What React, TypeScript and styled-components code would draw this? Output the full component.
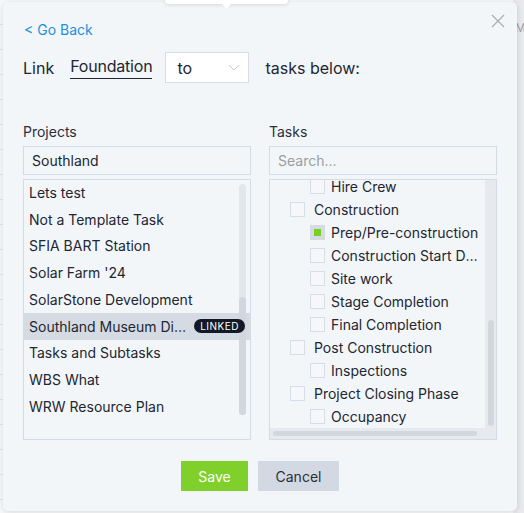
import React from "react";
import styled, { createGlobalStyle } from "styled-components";

const GlobalStyle = createGlobalStyle`
  html, body {
    margin: 0;
    padding: 0;
  }
  body {
    width: 524px;
    height: 513px;
    overflow: hidden;
    font-family: Inter, "Noto Sans", sans-serif;
    color: #222631;
    background: #f6f7f9;
  }
`;

const Page = styled.div`
  position: relative;
  width: 524px;
  height: 513px;
  display: flex;
`;

// the table that sits behind the popover
const TableBehind = styled.div`
  flex: 1;
  background: repeating-linear-gradient(
    to bottom,
    #f8f9fa 0 24px,
    #e3e6ea 24px 25px
  );
`;

const SideBehind = styled.div`
  width: 9px;
  padding: 20px 0 0 2px;
  background: #e8eaed;
  color: #9a9ea6;
  font-size: 12px;
  overflow: hidden;
`;

const Tooltip = styled.div`
  position: absolute;
  z-index: 3;
  left: 165px;
  top: -4px;
  width: 123px;
  height: 8px;
  background: #fff;
  border-radius: 4px;
  box-shadow: 0 1px 4px rgba(0, 0, 0, 0.12);

  &::after {
    content: "";
    position: absolute;
    left: 58px;
    bottom: -3px;
    width: 7px;
    height: 7px;
    background: #fff;
    transform: rotate(45deg);
  }
`;

const Panel = styled.div`
  position: absolute;
  z-index: 2;
  left: 3px;
  top: 2px;
  width: 514px;
  height: 509px;
  box-sizing: border-box;
  padding: 18px 20px 0 20px;
  display: flex;
  flex-direction: column;
  background: #f3f6f9;
  border-radius: 5px;
  box-shadow: 0 1px 6px rgba(0, 0, 0, 0.14);
`;

const CloseButton = styled.button`
  position: absolute;
  top: 11px;
  right: 11px;
  width: 16px;
  height: 16px;
  padding: 0;
  border: 0;
  background: none;
  display: flex;
  align-items: center;
  justify-content: center;
  cursor: pointer;
`;

const GoBack = styled.a`
  align-self: flex-start;
  margin-left: 1px;
  font-size: 14px;
  line-height: 20px;
  color: #2290de;
  text-decoration: none;
  cursor: pointer;
`;

const LinkRow = styled.div`
  margin-top: 12px;
  height: 31px;
  display: flex;
  align-items: center;
  font-size: 16px;
  color: #222631;
`;

const Word = styled.span<{ $gap: number }>`
  margin-right: ${(p) => p.$gap}px;
`;

const Underlined = styled.span`
  margin-right: 13px;
  padding-bottom: 2px;
  border-bottom: 1px solid #222631;
  line-height: 20px;
  letter-spacing: -0.2px;
`;

const Select = styled.div`
  width: 84px;
  height: 31px;
  box-sizing: border-box;
  margin-right: 16px;
  padding: 0 8px 0 11px;
  display: flex;
  align-items: center;
  justify-content: space-between;
  background: #fff;
  border: 1px solid #d6dde6;
  font-size: 16px;
`;

const Columns = styled.div`
  margin-top: 40px;
  display: grid;
  grid-template-columns: 228px 228px;
  column-gap: 18px;
`;

const Column = styled.div`
  display: flex;
  flex-direction: column;
`;

const Label = styled.div`
  font-size: 14px;
  line-height: 18px;
  color: #2b2f38;
`;

const Input = styled.input`
  margin-top: 5px;
  height: 29px;
  box-sizing: border-box;
  padding: 0 8px;
  border: 1px solid #d4dbe4;
  background: #f3f6f9;
  font-family: Inter, "Noto Sans", sans-serif;
  font-size: 14px;
  color: #222631;
  outline: none;

  &::placeholder {
    color: #9a9ea5;
  }
`;

const ListBox = styled.div`
  position: relative;
  margin-top: 4px;
  height: 261px;
  box-sizing: border-box;
  border: 1px solid #d4dbe4;
  overflow: hidden;
`;

const ProjectList = styled.div`
  margin-top: -1px;
`;

const ProjectRow = styled.div<{ $active?: boolean }>`
  height: 26.75px;
  padding-left: 5px;
  display: flex;
  align-items: center;
  font-size: 14px;
  white-space: nowrap;
  background: ${(p) => (p.$active ? "#d5dbe3" : "transparent")};
`;

const RowText = styled.span`
  flex: 1;
  min-width: 0;
  overflow: hidden;
  text-overflow: ellipsis;
`;

const Badge = styled.span`
  position: relative;
  z-index: 1;
  flex: none;
  margin: 0 5px 0 8px;
  height: 14px;
  padding: 0 6px;
  display: flex;
  align-items: center;
  border-radius: 7px;
  background: #131926;
  color: #fff;
  font-size: 10px;
  letter-spacing: 0.5px;
`;

// scrollbar painted over the project list
const OverlayTrack = styled.div`
  position: absolute;
  top: 4px;
  right: 4px;
  width: 7px;
  height: 231px;
  border-radius: 4px;
  background: #e3e7eb;
  display: flex;
  flex-direction: column;
  justify-content: flex-end;
`;

const Thumb = styled.div<{ $size: number; $vertical?: boolean }>`
  border-radius: 4px;
  background: #d2d7dd;
  ${(p) =>
    p.$vertical ? `height: ${p.$size}px; width: 100%;` : `width: ${p.$size}px; height: 5px;`}
`;

const TreeBox = styled(ListBox)`
  display: grid;
  grid-template-columns: 215px 11px;
  grid-template-rows: 248px 11px;
`;

const Tree = styled.div`
  overflow: hidden;
`;

const TreeInner = styled.div`
  margin-top: -5px;
`;

const TaskRow = styled.div<{ $level: number; $gap: number }>`
  height: 23px;
  padding: 0 1px 0 ${(p) => (p.$level === 1 ? 20 : 40)}px;
  display: flex;
  align-items: center;
  gap: ${(p) => p.$gap}px;
  font-size: 14px;
  white-space: nowrap;
`;

const Check = styled.span<{ $checked?: boolean }>`
  flex: none;
  width: 15px;
  height: 15px;
  box-sizing: border-box;
  display: flex;
  align-items: center;
  justify-content: center;
  border: 1px solid ${(p) => (p.$checked ? "#d5dbe3" : "#d6dde6")};
  background: ${(p) => (p.$checked ? "#d5dbe3" : "#f5f7fa")};

  &::after {
    content: "";
    display: ${(p) => (p.$checked ? "block" : "none")};
    width: 7px;
    height: 7px;
    background: #7ccf22;
  }
`;

const VGutter = styled.div`
  padding: 0 2px 2px 3px;
  display: flex;
  flex-direction: column;
  justify-content: flex-end;
  background: #e6e9ed;
`;

const HGutter = styled.div`
  padding-left: 3px;
  display: flex;
  align-items: center;
  background: #e6e9ed;
`;

const Corner = styled.div`
  background: #e6e9ed;
`;

const Footer = styled.div`
  margin-top: 21px;
  display: flex;
  justify-content: center;
  gap: 10px;
`;

const Button = styled.button<{ $primary?: boolean }>`
  height: 30px;
  width: ${(p) => (p.$primary ? 67 : 81)}px;
  border: 0;
  padding: 0;
  font-family: Inter, "Noto Sans", sans-serif;
  font-size: 14px;
  background: ${(p) => (p.$primary ? "#80d02b" : "#d3d9e2")};
  color: ${(p) => (p.$primary ? "#fff" : "#2b2f38")};
  cursor: pointer;
`;

const projects = [
  "Lets test",
  "Not a Template Task",
  "SFIA BART Station",
  "Solar Farm '24",
  "SolarStone Development",
  "Southland Museum District",
  "Tasks and Subtasks",
  "WBS What",
  "WRW Resource Plan",
];

const tasks: { name: string; level: number; checked?: boolean }[] = [
  { name: "Hire Crew", level: 2 },
  { name: "Construction", level: 1 },
  { name: "Prep/Pre-construction", level: 2, checked: true },
  { name: "Construction Start Date", level: 2 },
  { name: "Site work", level: 2 },
  { name: "Stage Completion", level: 2 },
  { name: "Final Completion", level: 2 },
  { name: "Post Construction", level: 1 },
  { name: "Inspections", level: 2 },
  { name: "Project Closing Phase", level: 1 },
  { name: "Occupancy", level: 2 },
];

export default function App() {
  return (
    <Page>
      <GlobalStyle />
      <TableBehind />
      <SideBehind>M</SideBehind>
      <Tooltip />
      <Panel>
        <CloseButton aria-label="Close">
          <svg width="14" height="14" viewBox="0 0 14 14">
            <path d="M1 1L13 13M13 1L1 13" stroke="#a9adb3" strokeWidth="1.2" />
          </svg>
        </CloseButton>
        <GoBack>&lt; Go Back</GoBack>

        <LinkRow>
          <Word $gap={16}>Link</Word>
          <Underlined>Foundation</Underlined>
          <Select>
            <span>to</span>
            <svg width="12" height="7" viewBox="0 0 12 7">
              <path d="M1 1L6 6L11 1" fill="none" stroke="#c9ced6" strokeWidth="1" />
            </svg>
          </Select>
          <Word $gap={0}>tasks below:</Word>
        </LinkRow>

        <Columns>
          <Column>
            <Label>Projects</Label>
            <Input defaultValue="Southland" />
            <ListBox>
              <ProjectList>
                {projects.map((p) => {
                  const active = p.startsWith("Southland");
                  return (
                    <ProjectRow key={p} $active={active}>
                      <RowText>{p}</RowText>
                      {active && <Badge>LINKED</Badge>}
                    </ProjectRow>
                  );
                })}
              </ProjectList>
              <OverlayTrack>
                <Thumb $vertical $size={118} />
              </OverlayTrack>
            </ListBox>
          </Column>

          <Column>
            <Label>Tasks</Label>
            <Input placeholder="Search..." />
            <TreeBox>
              <Tree>
                <TreeInner>
                  {tasks.map((t) => (
                    <TaskRow key={t.name} $level={t.level} $gap={t.level === 1 ? 9 : 6}>
                      <Check $checked={t.checked} />
                      <RowText>{t.name}</RowText>
                    </TaskRow>
                  ))}
                </TreeInner>
              </Tree>
              <VGutter>
                <Thumb $vertical $size={106} />
              </VGutter>
              <HGutter>
                <Thumb $size={204} />
              </HGutter>
              <Corner />
            </TreeBox>
          </Column>
        </Columns>

        <Footer>
          <Button $primary>Save</Button>
          <Button>Cancel</Button>
        </Footer>
      </Panel>
    </Page>
  );
}
